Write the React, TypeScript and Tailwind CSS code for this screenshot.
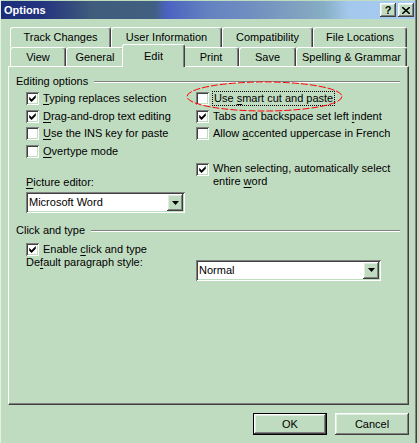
import React from 'react';

// classic 3d edges, tinted for the green scheme
const raised =
  'shadow-[inset_-1px_-1px_#404040,inset_1px_1px_#ffffff,inset_-2px_-2px_#808080,inset_2px_2px_#dfeedf]';
const sunken =
  'shadow-[inset_1px_1px_#808080,inset_-1px_-1px_#ffffff,inset_2px_2px_#404040,inset_-2px_-2px_#c0dcc0]';

function Check({ checked }: { checked?: boolean }) {
  return (
    <span className={`w-[13px] h-[13px] shrink-0 bg-white flex items-center justify-center ${sunken}`}>
      {checked && (
        <svg width="7" height="7" viewBox="0 0 7 7.5">
          <path d="M0 2 L2.5 4.5 L7 0 L7 3 L2.5 7.5 L0 5 Z" fill="#000" />
        </svg>
      )}
    </span>
  );
}

function Opt({ checked, children }: { checked?: boolean; children: React.ReactNode }) {
  return (
    <div className="flex items-center gap-[4px] h-[17.6px]">
      <Check checked={checked} />
      <span className="leading-[13px] whitespace-nowrap">{children}</span>
    </div>
  );
}

function U({ children }: { children: React.ReactNode }) {
  return <span className="underline underline-offset-[2px]">{children}</span>;
}

function GroupTitle({ title }: { title: string }) {
  return (
    <div className="flex items-center pl-[7px] pr-[8px] h-[13px] leading-[13px]">
      <span className="pr-[6px] whitespace-nowrap">{title}</span>
      <span className="flex-1 h-[2px] border-t border-t-[#808080] border-b border-b-white" />
    </div>
  );
}

function Select({ value, className = '' }: { value: string; className?: string }) {
  return (
    <div className={`h-[21px] bg-white flex items-center p-[2px] ${sunken} ${className}`}>
      <span className="flex-1 pl-[1px] leading-[13px]">{value}</span>
      <span className={`w-[16px] h-[17px] bg-[#c0dcc0] flex items-center justify-center ${raised}`}>
        <svg width="7" height="4" viewBox="0 0 7 4">
          <path d="M0 0 H7 L3.5 4 Z" fill="#000" />
        </svg>
      </span>
    </div>
  );
}

const tabEdge =
  'border-t border-l border-white border-r border-r-[#404040] rounded-t-[3px] shadow-[inset_-1px_0_#808080] flex items-center justify-center whitespace-nowrap';

export default function App() {
  return (
    <div className="relative w-[419px] h-[443px] bg-[#c0dcc0] text-[11px] text-black font-['Liberation_Sans',Arial,sans-serif] overflow-hidden">
      <div className="w-[417px] h-[443px] border-l border-l-[#e4f0e4] border-r border-r-[#404040] shadow-[inset_-1px_0_#808080] flex flex-col">
        {/* Title bar */}
        <div className="mt-[1px] mr-[1px] h-[18px] flex items-center justify-between bg-[linear-gradient(90deg,#1b2d7a_0%,#24337e_10%,#3f5c7c_22%,#415f80_37%,#4a62c0_40%,#6482c0_50%,#6f8ec0_60%,#82a2c0_72%,#86aec4_78%,#a4c8ec_84%,#a8ccf2_100%)]">
          <span className="pl-[3px] font-bold text-white text-[11px] leading-[13px]">Options</span>
          <div className="flex gap-[2px] pr-[1px]">
            <span className={`w-[16px] h-[14px] bg-[#c0dcc0] flex items-center justify-center font-bold text-[11px] leading-none ${raised}`}>
              ?
            </span>
            <span className={`w-[16px] h-[14px] bg-[#c0dcc0] flex items-center justify-center ${raised}`}>
              <svg width="8" height="7" viewBox="0 0 8 7">
                <path d="M0 0 L8 7 M8 0 L0 7" stroke="#000" strokeWidth="1.6" />
              </svg>
            </span>
          </div>
        </div>

        {/* Tabs, back row */}
        <div className="mt-[8px] ml-[9px] flex h-[20px]">
          <div className={`w-[101px] h-[20px] ${tabEdge}`}>Track Changes</div>
          <div className={`w-[111px] h-[20px] ${tabEdge}`}>User Information</div>
          <div className={`w-[91px] h-[20px] ${tabEdge}`}>Compatibility</div>
          <div className={`w-[94px] h-[20px] ${tabEdge}`}>File Locations</div>
        </div>
        {/* Tabs, front row */}
        <div className="ml-[9px] flex items-start h-[19px]">
          <div className={`w-[56px] h-[19px] ${tabEdge}`}>View</div>
          <div className={`w-[58px] h-[19px] ${tabEdge}`}>General</div>
          <div className="relative z-10 w-[63px] h-[23px] -mx-[2px] -mt-[3px] bg-[#c0dcc0] border-t border-l border-white border-r border-r-[#404040] rounded-t-[3px] shadow-[inset_-1px_0_#808080] flex items-center justify-center">
            Edit
          </div>
          <div className={`w-[56px] h-[19px] ${tabEdge}`}>Print</div>
          <div className={`w-[57px] h-[19px] ${tabEdge}`}>Save</div>
          <div className={`w-[111px] h-[19px] ${tabEdge}`}>Spelling &amp; Grammar</div>
        </div>

        {/* Page */}
        <div className="ml-[7px] w-[401px] h-[339px] border-t border-l border-white border-r border-b border-r-[#404040] border-b-[#404040] shadow-[inset_-1px_-1px_#808080] flex flex-col">
          <div className="pt-[8px]">
            <GroupTitle title="Editing options" />
          </div>
          <div className="mt-[2px] pl-[17px] flex">
            <div className="w-[170px] flex flex-col">
              <Opt checked>
                <U>T</U>yping replaces selection
              </Opt>
              <Opt checked>
                <U>D</U>rag-and-drop text editing
              </Opt>
              <Opt>
                <U>U</U>se the INS key for paste
              </Opt>
              <Opt>
                <U>O</U>vertype mode
              </Opt>
              <div className="mt-[16px] leading-[13px]">
                <U>P</U>icture editor:
              </div>
              <Select value="Microsoft Word" className="mt-[3px] w-[159px]" />
            </div>
            <div className="flex flex-col">
              <div className="flex items-center gap-[3px] h-[17.6px]">
                <Check />
                <span className="leading-[13px] px-[1px] border border-dotted border-black whitespace-nowrap">
                  Use <U>s</U>mart cut and paste
                </span>
              </div>
              <Opt checked>
                Tabs and backspace set left <U>i</U>ndent
              </Opt>
              <Opt>
                Allow <U>a</U>ccented uppercase in French
              </Opt>
              <div className="mt-[19px] flex items-start gap-[4px]">
                <span className="mt-[1px]">
                  <Check checked />
                </span>
                <span className="leading-[13px]">
                  When selecting, automatically select
                  <br />
                  entire <U>w</U>ord
                </span>
              </div>
            </div>
          </div>

          <div className="mt-[11px]">
            <GroupTitle title="Click and type" />
          </div>
          <div className="mt-[6px] pl-[17px] flex items-center gap-[4px] h-[13px]">
            <Check checked />
            <span className="leading-[13px]">
              Enable <U>c</U>lick and type
            </span>
          </div>
          <div className="pl-[17px] flex items-start">
            <span className="w-[170px] leading-[13px]">
              De<U>f</U>ault paragraph style:
            </span>
            <Select value="Normal" className="mt-[3.5px] w-[185px]" />
          </div>
        </div>

        {/* Buttons */}
        <div className="mt-[8px] pr-[7px] flex justify-end gap-[8px]">
          <div className="w-[74px] h-[22px] border border-black">
            <div className={`w-full h-full flex items-center justify-center ${raised}`}>OK</div>
          </div>
          <div className={`w-[74px] h-[22px] flex items-center justify-center ${raised}`}>Cancel</div>
        </div>
      </div>

      {/* red annotation ellipse */}
      <svg className="absolute left-[186px] top-[81px]" width="158" height="32" viewBox="0 0 158 32">
        <ellipse cx="78.5" cy="15.5" rx="77.5" ry="14.5" fill="none" stroke="#ff0000" strokeWidth="1" strokeDasharray="7 2" />
      </svg>
    </div>
  );
}
